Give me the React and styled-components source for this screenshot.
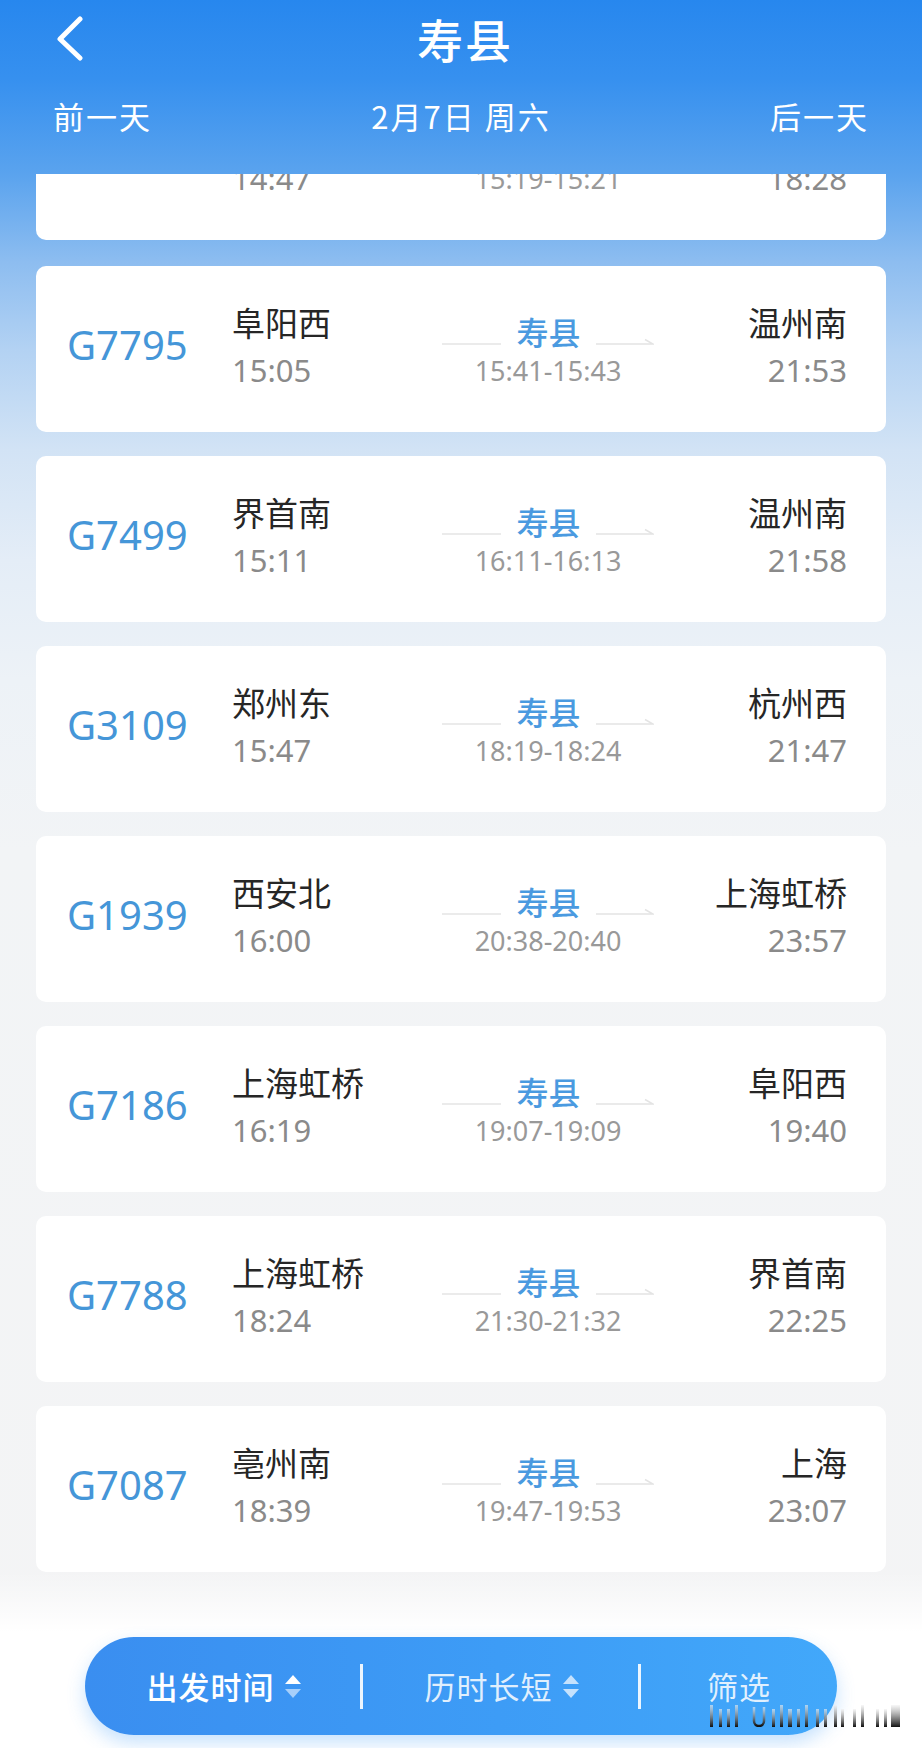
import React from 'react';
import styled, { createGlobalStyle } from 'styled-components';

const GlobalStyle = createGlobalStyle`
  body {
    margin: 0;
    font-family: 'Noto Sans', 'Noto Sans CJK SC', sans-serif;
    background: #f4f4f5;
  }
`;

const trains = [
  { no: 'G7795', from: '阜阳西', dep: '15:05', stop: '15:41-15:43', to: '温州南', arr: '21:53' },
  { no: 'G7499', from: '界首南', dep: '15:11', stop: '16:11-16:13', to: '温州南', arr: '21:58' },
  { no: 'G3109', from: '郑州东', dep: '15:47', stop: '18:19-18:24', to: '杭州西', arr: '21:47' },
  { no: 'G1939', from: '西安北', dep: '16:00', stop: '20:38-20:40', to: '上海虹桥', arr: '23:57' },
  { no: 'G7186', from: '上海虹桥', dep: '16:19', stop: '19:07-19:09', to: '阜阳西', arr: '19:40' },
  { no: 'G7788', from: '上海虹桥', dep: '18:24', stop: '21:30-21:32', to: '界首南', arr: '22:25' },
  { no: 'G7087', from: '亳州南', dep: '18:39', stop: '19:47-19:53', to: '上海', arr: '23:07' },
];

// scrolled under the header: only the time row is visible
const partial = { no: '', from: '', dep: '14:47', stop: '15:19-15:21', to: '', arr: '18:28', scrolled: true };

const watermarkBars = [
  [0, 3], [9, 3], [17, 3], [25, 3], [44, 10], [62, 3], [70, 3], [78, 4], [87, 3], [95, 3],
  [106, 3], [114, 3], [124, 3], [131, 3], [143, 3], [151, 3], [166, 3], [174, 3], [181, 9],
];

const Page = styled.div`
  width: 922px;
  height: 1748px;
  overflow: hidden;
  position: relative;
  display: flex;
  flex-direction: column;
  background: linear-gradient(
    180deg,
    #5aa3ee 174px,
    #8dbdf0 262px,
    #b3d2f3 350px,
    #d2e3f5 450px,
    #e4edf7 560px,
    #edf2f7 680px,
    #f2f4f6 850px,
    #f4f4f5 100%
  );
`;

const Header = styled.header`
  height: 174px;
  box-sizing: border-box;
  padding-top: 10px;
  background: linear-gradient(180deg, #2787ee 0%, #3690ef 45%, #5aa3ee 100%);
  color: #fff;
  font-family: 'Noto Sans CJK SC', sans-serif;
  flex-shrink: 0;
  position: relative;
  z-index: 2;
`;

const TitleRow = styled.div`
  display: grid;
  grid-template-columns: 1fr auto 1fr;
  align-items: center;
  height: 56px;
`;

const Back = styled.div`
  padding-left: 55px;
  display: flex;
  align-items: center;
`;

const Title = styled.h1`
  margin: 0;
  padding-left: 8px;
  font-size: 46px;
  line-height: 56px;
  font-weight: 500;
  letter-spacing: 2px;
`;

const DateRow = styled.div`
  margin-top: 30px;
  display: flex;
  justify-content: space-between;
  padding: 0 53px 0 53px;
  font-size: 31px;
  line-height: 40px;
  letter-spacing: 2px;
`;

const List = styled.div`
  display: flex;
  flex-direction: column;
  gap: 24px;
  padding: 0 36px;
`;

const Clip = styled.div`
  height: 66px;
  margin-bottom: 2px;
  overflow: hidden;
  display: flex;
  flex-direction: column;
  justify-content: flex-end;
`;

const Card = styled.div`
  flex-shrink: 0;
  height: 166px;
  box-sizing: border-box;
  background: #fff;
  border-radius: 10px;
  padding: 0 39px 8px 31px;
  display: grid;
  grid-template-columns: 165px 160px 312px 1fr;
  align-items: center;
`;

const TrainNo = styled.div`
  font-size: 40px;
  line-height: 40px;
  min-height: 40px;
  color: #4596d8;
`;

const Stop = styled.div`
  display: flex;
  flex-direction: column;
  align-items: ${(p) => (p.$right ? 'flex-end' : 'flex-start')};
`;

const Station = styled.div`
  font-family: 'Noto Sans CJK SC', sans-serif;
  font-size: 33px;
  line-height: 40px;
  min-height: 40px;
  color: #262626;
  white-space: nowrap;
`;

const Time = styled.div`
  margin-top: 10px;
  font-size: 31px;
  line-height: 37px;
  color: #8a8a8a;
`;

const Middle = styled.div`
  margin-top: 9px;
  display: flex;
  flex-direction: column;
  align-items: center;
`;

const Via = styled.div`
  display: flex;
  align-items: flex-end;
  gap: 15px;
  min-height: 38px;
`;

const ViaName = styled.div`
  font-family: 'Noto Sans CJK SC', sans-serif;
  font-size: 32px;
  line-height: 38px;
  font-weight: 500;
  color: #4a9ae0;
`;

const ViaTime = styled.div`
  margin-top: 5px;
  font-size: 27px;
  line-height: 32px;
  color: #999;
`;

const BottomArea = styled.div`
  margin-top: auto;
  padding: 65px 0 13px;
  display: flex;
  justify-content: center;
  background: linear-gradient(180deg, rgba(255, 255, 255, 0) 0, #fff 60px);
`;

const Bar = styled.nav`
  width: 752px;
  height: 98px;
  border-radius: 49px;
  background: linear-gradient(90deg, #3a8ef0 0%, #3d9cf6 55%, #42a8fa 100%);
  box-shadow: 0 8px 18px rgba(70, 160, 250, 0.3);
  display: grid;
  grid-template-columns: 277px 278px 1fr;
  align-items: center;
  font-family: 'Noto Sans CJK SC', sans-serif;
`;

const Segment = styled.div`
  display: flex;
  justify-content: center;
  align-items: center;
  gap: 10px;
  height: 45px;
  border-left: ${(p) => (p.$divider ? '3px solid rgba(255,255,255,0.9)' : 'none')};
  margin-left: ${(p) => (p.$divider ? '-2px' : '0')};
  color: ${(p) => (p.$active ? '#fff' : 'rgba(255,255,255,0.85)')};
  font-size: 31px;
  line-height: 40px;
  font-weight: ${(p) => (p.$active ? 500 : 400)};
  letter-spacing: 1px;
`;

const Watermark = styled.svg`
  position: absolute;
  left: 710px;
  top: 1703px;
`;

const BackIcon = () => (
  <svg width="30" height="46" viewBox="0 0 30 46">
    <polyline points="25,4 5,24 25,43" fill="none" stroke="#fff" strokeWidth="5" strokeLinecap="round" strokeLinejoin="round" />
  </svg>
);

const LineLeft = () => (
  <svg width="59" height="12" viewBox="0 0 59 12">
    <line x1="0" y1="6" x2="59" y2="6" stroke="#e4e4e4" strokeWidth="1.5" />
  </svg>
);

const LineRight = () => (
  <svg width="58" height="12" viewBox="0 0 58 12">
    <polyline points="0,6 57,6 49,1.5" fill="none" stroke="#e4e4e4" strokeWidth="1.5" />
  </svg>
);

const SortIcon = ({ active }) => (
  <svg width="16" height="23" viewBox="0 0 16 23">
    <polygon points="8,0 16,9 0,9" fill="#fff" fillOpacity={active ? 1 : 0.7} />
    <polygon points="0,14 16,14 8,23" fill="#fff" fillOpacity={active ? 0.55 : 0.7} />
  </svg>
);

const TrainCard = ({ t }) => (
  <Card>
    <TrainNo>{t.no}</TrainNo>
    <Stop>
      <Station>{t.from}</Station>
      <Time>{t.dep}</Time>
    </Stop>
    <Middle>
      <Via>
        {!t.scrolled && (
          <>
            <LineLeft />
            <ViaName>寿县</ViaName>
            <LineRight />
          </>
        )}
      </Via>
      <ViaTime>{t.stop}</ViaTime>
    </Middle>
    <Stop $right>
      <Station>{t.to}</Station>
      <Time>{t.arr}</Time>
    </Stop>
  </Card>
);

export default function App() {
  return (
    <Page>
      <GlobalStyle />
      <Header>
        <TitleRow>
          <Back>
            <BackIcon />
          </Back>
          <Title>寿县</Title>
          <div />
        </TitleRow>
        <DateRow>
          <span>前一天</span>
          <span>2月7日 周六</span>
          <span>后一天</span>
        </DateRow>
      </Header>
      <List>
        <Clip>
          <TrainCard t={partial} />
        </Clip>
        {trains.map((t) => (
          <TrainCard key={t.no} t={t} />
        ))}
      </List>
      <BottomArea>
        <Bar>
          <Segment $active>
            出发时间
            <SortIcon active />
          </Segment>
          <Segment $divider>
            历时长短
            <SortIcon />
          </Segment>
          <Segment $divider>筛选</Segment>
        </Bar>
      </BottomArea>
      <Watermark width="192" height="24" viewBox="0 0 192 24">
        <defs>
          <linearGradient id="wm" x1="0" y1="0" x2="0" y2="1">
            <stop offset="0" stopColor="#f2f2f2" stopOpacity="0.6" />
            <stop offset="1" stopColor="#111" />
          </linearGradient>
        </defs>
        {watermarkBars.map(([x, w], i) =>
          w > 5 && i === 4 ? (
            <path key={i} d={`M${x} 4 V18 a5 5 0 0 0 10 0 V4`} fill="none" stroke="url(#wm)" strokeWidth="2.5" />
          ) : (
            <rect key={i} x={x} y={i % 3 === 0 ? 2 : 6} width={w} height={i % 3 === 0 ? 22 : 18} fill="url(#wm)" />
          )
        )}
      </Watermark>
    </Page>
  );
}
